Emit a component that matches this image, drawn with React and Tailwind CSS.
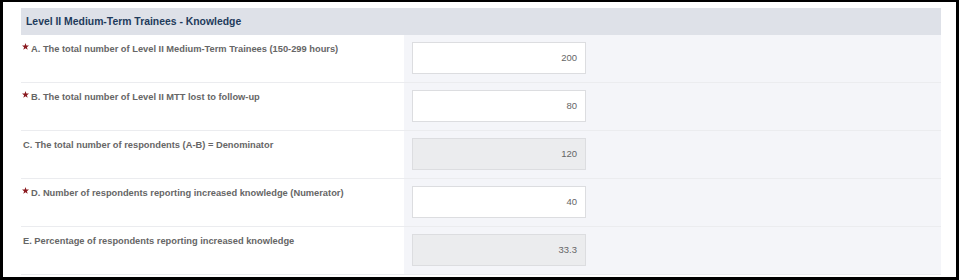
import React from "react";

const rows = [
  { key: "A", label: "A. The total number of Level II Medium-Term Trainees (150-299 hours)", value: "200", required: true },
  { key: "B", label: "B. The total number of Level II MTT lost to follow-up", value: "80", required: true },
  { key: "C", label: "C. The total number of respondents (A-B) = Denominator", value: "120", disabled: true },
  { key: "D", label: "D. Number of respondents reporting increased knowledge (Numerator)", value: "40", required: true },
  { key: "E", label: "E. Percentage of respondents reporting increased knowledge", value: "33.3", disabled: true },
];

function Star() {
  return (
    <svg width="7" height="7" viewBox="0 0 10 10" className="shrink-0">
      <path d="M5 0 L6.2 3.6 L10 3.7 L7 6 L8.1 9.7 L5 7.5 L1.9 9.7 L3 6 L0 3.7 L3.8 3.6 Z" fill="#8a1a1f" />
    </svg>
  );
}

export default function App() {
  return (
    <div
      className="w-[959px] h-[280px] bg-white border-black border-t-2 border-l-[3px] border-r-[3px] border-b-[3px] pt-[6px] pl-[18px] pr-[15px]"
      style={{ fontFamily: '"Liberation Sans", Arial, sans-serif' }}
    >
      <div className="h-[27px] bg-[#dee1e8] flex items-center pl-[5px]">
        <span className="text-[10.4px] font-bold text-[#1e3b5b]">Level II Medium-Term Trainees - Knowledge</span>
      </div>
      {rows.map((row) => (
        <div key={row.key} className="flex h-[48px] border-b border-[#ebecef]">
          <div className="w-[383px] pt-[8px] pl-[1px] flex items-start">
            {row.required ? (
              <span className="w-[9px] mt-[0px]">
                <Star />
              </span>
            ) : (
              <span className="w-[1px]" />
            )}
            <span className="text-[9.3px] leading-[12px] font-bold text-[#666]">{row.label}</span>
          </div>
          <div className="flex-1 bg-[#f4f5f9] pt-[7px] pl-[8px]">
            <div
              className={
                "w-[174px] h-[32px] border border-[#dcdde0] flex items-center justify-end pr-[8px] text-[9.5px] text-[#666] " +
                (row.disabled ? "bg-[#ebecee]" : "bg-white")
              }
            >
              {row.value}
            </div>
          </div>
        </div>
      ))}
    </div>
  );
}
